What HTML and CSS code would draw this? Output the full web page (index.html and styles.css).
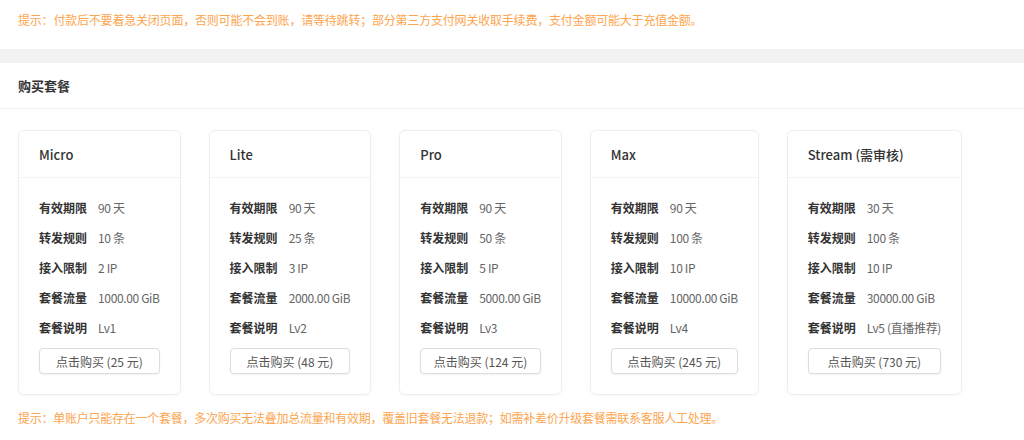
FILE: index.html
```html
<!DOCTYPE html>
<html lang="zh-CN">
<head>
  <meta charset="UTF-8">
  <meta name="viewport" content="width=device-width, initial-scale=1.0">
  <title>购买套餐</title>
  <link rel="stylesheet" href="styles.css">
</head>
<body>
  <!-- Top notice -->
  <div class="panel notice-panel">
    <p class="notice">提示：付款后不要着急关闭页面，否则可能不会到账，请等待跳转；部分第三方支付网关收取手续费，支付金额可能大于充值金额。</p>
  </div>

  <!-- Plans -->
  <div class="panel buy-panel">
    <div class="panel-head">购买套餐</div>
    <div class="panel-body">
      <div class="plans">
        <div class="plan">
          <div class="plan-head">Micro</div>
          <div class="plan-body">
            <div class="row"><span class="label">有效期限</span><span class="value">90 天</span></div>
            <div class="row"><span class="label">转发规则</span><span class="value">10 条</span></div>
            <div class="row"><span class="label">接入限制</span><span class="value">2 IP</span></div>
            <div class="row"><span class="label">套餐流量</span><span class="value">1000.00 GiB</span></div>
            <div class="row"><span class="label">套餐说明</span><span class="value">Lv1</span></div>
            <button class="buy-btn">点击购买 (25 元)</button>
          </div>
        </div>
        <div class="plan">
          <div class="plan-head">Lite</div>
          <div class="plan-body">
            <div class="row"><span class="label">有效期限</span><span class="value">90 天</span></div>
            <div class="row"><span class="label">转发规则</span><span class="value">25 条</span></div>
            <div class="row"><span class="label">接入限制</span><span class="value">3 IP</span></div>
            <div class="row"><span class="label">套餐流量</span><span class="value">2000.00 GiB</span></div>
            <div class="row"><span class="label">套餐说明</span><span class="value">Lv2</span></div>
            <button class="buy-btn">点击购买 (48 元)</button>
          </div>
        </div>
        <div class="plan">
          <div class="plan-head">Pro</div>
          <div class="plan-body">
            <div class="row"><span class="label">有效期限</span><span class="value">90 天</span></div>
            <div class="row"><span class="label">转发规则</span><span class="value">50 条</span></div>
            <div class="row"><span class="label">接入限制</span><span class="value">5 IP</span></div>
            <div class="row"><span class="label">套餐流量</span><span class="value">5000.00 GiB</span></div>
            <div class="row"><span class="label">套餐说明</span><span class="value">Lv3</span></div>
            <button class="buy-btn">点击购买 (124 元)</button>
          </div>
        </div>
        <div class="plan">
          <div class="plan-head">Max</div>
          <div class="plan-body">
            <div class="row"><span class="label">有效期限</span><span class="value">90 天</span></div>
            <div class="row"><span class="label">转发规则</span><span class="value">100 条</span></div>
            <div class="row"><span class="label">接入限制</span><span class="value">10 IP</span></div>
            <div class="row"><span class="label">套餐流量</span><span class="value">10000.00 GiB</span></div>
            <div class="row"><span class="label">套餐说明</span><span class="value">Lv4</span></div>
            <button class="buy-btn">点击购买 (245 元)</button>
          </div>
        </div>
        <div class="plan">
          <div class="plan-head">Stream (需审核)</div>
          <div class="plan-body">
            <div class="row"><span class="label">有效期限</span><span class="value">30 天</span></div>
            <div class="row"><span class="label">转发规则</span><span class="value">100 条</span></div>
            <div class="row"><span class="label">接入限制</span><span class="value">10 IP</span></div>
            <div class="row"><span class="label">套餐流量</span><span class="value">30000.00 GiB</span></div>
            <div class="row"><span class="label">套餐说明</span><span class="value">Lv5 (直播推荐)</span></div>
            <button class="buy-btn">点击购买 (730 元)</button>
          </div>
        </div>
      </div>
      <p class="notice bottom-notice">提示：单账户只能存在一个套餐，多次购买无法叠加总流量和有效期，覆盖旧套餐无法退款；如需补差价升级套餐需联系客服人工处理。</p>
    </div>
  </div>
</body>
</html>
```

FILE: styles.css
```css
/* General */
body {
  margin: 0;
  background: #f2f2f2;
  font-family: "Noto Sans CJK SC", "Noto Sans", sans-serif;
  font-size: 12px;
  color: #333;
}

.panel {
  background: #fff;
}

/* Notices */
.notice {
  margin: 0;
  line-height: 20px;
  color: #fca54e;
  letter-spacing: -0.2px;
}

.notice-panel {
  padding: 10px 18px 19px;
}

.bottom-notice {
  margin-top: 13px;
  letter-spacing: -0.25px;
}

/* Buy panel */
.buy-panel {
  margin-top: 14px;
  min-height: 377px;
}

.panel-head {
  height: 45px;
  line-height: 46px;
  padding: 0 18px;
  font-size: 13px;
  font-weight: bold;
  border-bottom: 1px solid #eeeeee;
}

.panel-body {
  padding: 21px 18px 10px;
}

.plans {
  display: flex;
  align-items: flex-start;
  gap: 28px;
}

/* Plan card */
.plan {
  border: 1px solid #eeeeee;
  border-radius: 6px;
  box-shadow: 0 1px 3px rgba(0, 0, 0, 0.03);
}

.plan-head {
  height: 46px;
  line-height: 47px;
  padding: 0 20px;
  font-size: 13px;
  font-weight: 500;
  color: #333;
  border-bottom: 1px solid #f3f3f3;
}

.plan-body {
  padding: 20px;
}

.row {
  display: flex;
  line-height: 19px;
  margin-bottom: 11px;
  white-space: nowrap;
}

.label {
  font-weight: bold;
  color: #333;
  margin-right: 11px;
}

.value {
  color: #666;
  letter-spacing: -0.35px;
}

.buy-btn {
  display: block;
  width: 100%;
  height: 26px;
  padding: 0 12px;
  background: #fff;
  border: 1px solid #dddddd;
  border-radius: 4px;
  box-shadow: 0 1px 2px rgba(0, 0, 0, 0.06);
  font-family: inherit;
  font-size: 12px;
  color: #555;
  white-space: nowrap;
  cursor: pointer;
}
```
